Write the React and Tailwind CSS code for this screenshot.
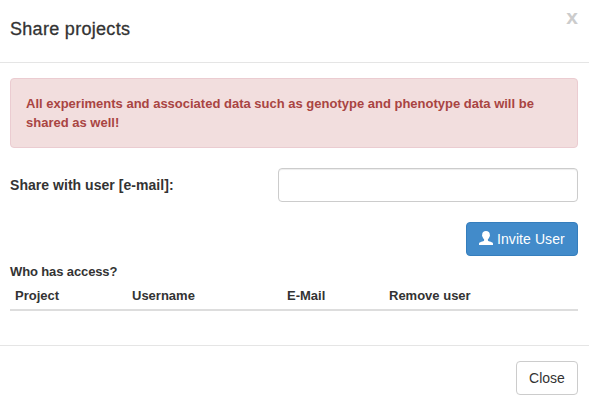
const columns = [
  { label: 'Project', width: 'w-[117px]' },
  { label: 'Username', width: 'w-[155px]' },
  { label: 'E-Mail', width: 'w-[102px]' },
  { label: 'Remove user', width: 'w-[194px]' },
];

function UserIcon() {
  return (
    <svg className="w-[14px] h-[14px] shrink-0 -mt-[3px]" viewBox="0 0 14 14" fill="currentColor" aria-hidden="true">
      <path d="M7 0C4.600 0 3.200 1.400 3.200 3.600c0 .6-.3.8-.1 1.400.1.500.4.700.5 1 .2 1 .7 1.700 1.500 2.300v1.100c-.3.600-1.500.9-2.800 1.400C.9 11.300 0 11.800 0 12.800V14h14v-1.200c0-1-.9-1.500-2.300-2-1.300-.5-2.500-.8-2.800-1.400V8.300c.8-.6 1.300-1.300 1.500-2.300.1-.3.4-.5.5-1 .2-.6-.1-.8-.1-1.400C10.800 1.400 9.400 0 7 0z" />
    </svg>
  );
}

export default function App() {
  return (
    <div className="w-[589px] h-[400px] overflow-hidden bg-white text-[#333] font-['Liberation_Sans',Arial,sans-serif] text-sm">
      {/* HEADER */}
      <div className="flex justify-between h-[63px] pl-[10px] pr-[11px] border-b border-[#e5e5e5]">
        <h4 className="mt-[19px] text-[18px] leading-5 tracking-[0.3px] [-webkit-text-stroke:0.3px_#333]">Share projects</h4>
        <button type="button" className="mt-[6px] h-[21px] text-[21px] leading-[21px] font-bold text-[#ccc]">x</button>
      </div>

      {/* BODY */}
      <div className="h-[282px] pt-[15px] pl-[10px] pr-[11px]">
        <div className="h-[70px] px-[15px] py-[15px] rounded border border-[#ebccd1] bg-[#f2dede] text-[#a94442] text-[13px] leading-[19px] font-bold">
          All experiments and associated data such as genotype and phenotype data will be shared as well!
        </div>

        <div className="mt-5 flex items-center justify-between">
          <label htmlFor="email" className="font-bold tracking-[0.04px]">Share with user [e-mail]:</label>
          <input
            id="email"
            type="text"
            className="w-[300px] h-[34px] px-3 rounded border border-[#ccc] bg-white shadow-[inset_0_1px_1px_rgba(0,0,0,0.075)] outline-none"
          />
        </div>

        <div className="mt-5 flex justify-end">
          <button type="button" className="flex items-center gap-1 w-[112px] h-[34px] pl-3 rounded border border-[#357ebd] bg-[#428bca] text-white">
            <UserIcon />
            <span className="whitespace-nowrap tracking-[0.08px]">Invite User</span>
          </button>
        </div>

        <p className="mt-[6px] text-[13px] leading-5 font-bold tracking-[-0.12px]">Who has access?</p>
        <table className="w-full table-fixed border-collapse text-[13px] leading-[18px]">
          <thead>
            <tr className="border-b-2 border-[#ddd]">
              {columns.map((col) => (
                <th key={col.label} className={`${col.width} h-[28px] px-[5px] pt-[5px] pb-[3px] text-left align-top font-bold`}>
                  {col.label}
                </th>
              ))}
            </tr>
          </thead>
        </table>
      </div>

      {/* FOOTER */}
      <div className="flex justify-end pt-[15px] pr-[11px] border-t border-[#e5e5e5]">
        <button type="button" className="w-[62px] h-[34px] rounded border border-[#ccc] bg-white">Close</button>
      </div>
    </div>
  );
}
